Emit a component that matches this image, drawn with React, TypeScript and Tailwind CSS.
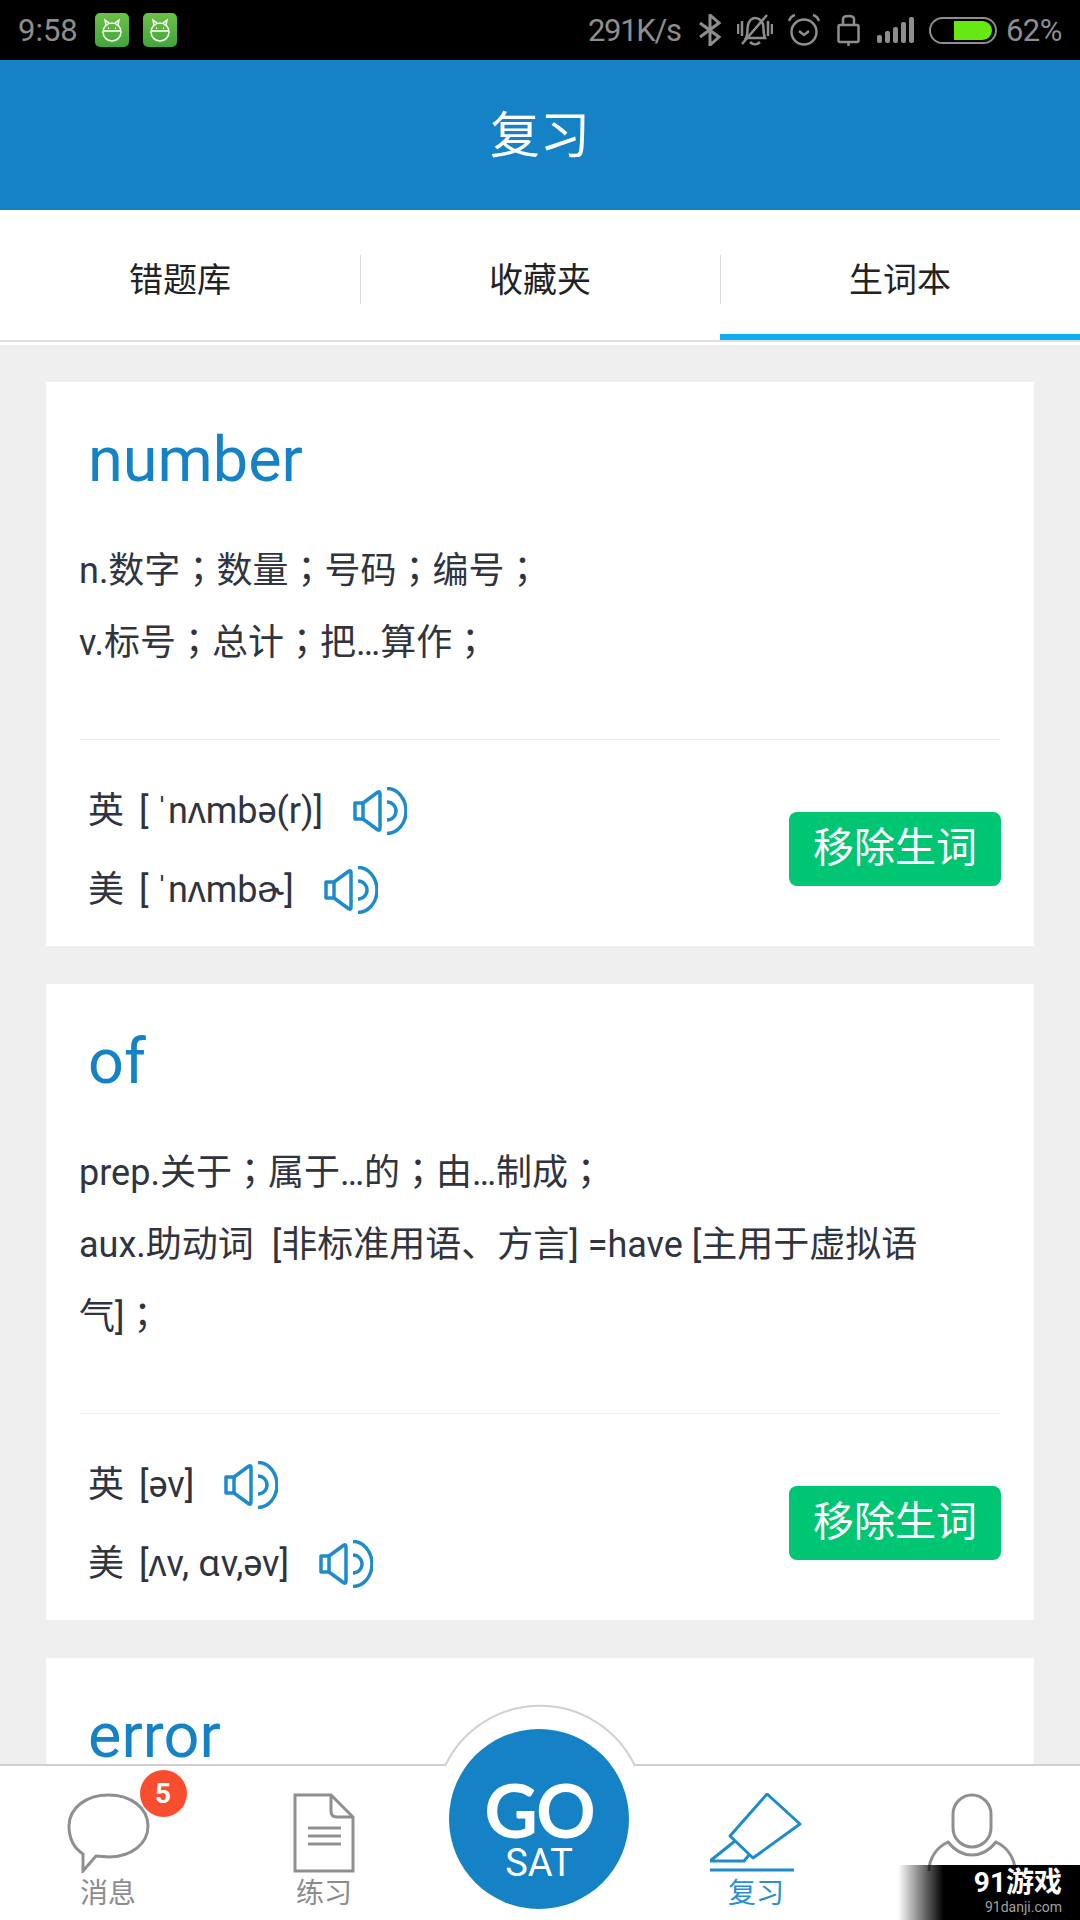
function CatIcon() {
  return (
    <div className="w-[34px] h-[34px] rounded-[5px] bg-gradient-to-b from-[#6cc044] to-[#3da73b] flex items-center justify-center">
      <svg width="22" height="24" viewBox="0 0 22 24" fill="none" stroke="#fff" strokeWidth="1.5">
        <circle cx="11" cy="14" r="9" />
        <path d="M2 13h18M5 7L4 2l4 3M17 7l1-5-4 3" />
        <path d="M7 10h1M14 10h1" />
      </svg>
    </div>
  );
}

function StatusIcons() {
  return (
    <div className="flex items-center text-[#8e8e8e]">
      <span className="text-[31px] leading-none tracking-[-1.3px] w-[111px]">291K/s</span>
      <svg width="22" height="32" viewBox="0 0 22 32" fill="none" stroke="currentColor" strokeWidth="3">
        <path d="M1 9l19 14-9 8V1l9 8L1 23" />
      </svg>
      <svg className="ml-[16px]" width="36" height="34" viewBox="0 0 36 34" fill="none" stroke="currentColor" strokeWidth="2.5">
        <path d="M9 25c2-3 1-8 2-13 1-4 4-7 7-7s6 2 8 6c1 5 0 10 2 14z" />
        <path d="M13 29c3 3 7 3 10 0M5 31L30 2M1 11v10M5 8v15M31 8v15M35 11v10" />
      </svg>
      <svg className="ml-[14px]" width="34" height="34" viewBox="0 0 34 34" fill="none" stroke="currentColor" strokeWidth="2.5">
        <circle cx="17" cy="19" r="12.5" />
        <path d="M12 18l5 4 5-4M2 8c1-3 3-5 6-6M32 8c-1-3-3-5-6-6" />
      </svg>
      <svg className="ml-[16px]" width="23" height="32" viewBox="0 0 23 32" fill="none" stroke="currentColor" strokeWidth="2.5">
        <rect x="1.5" y="11" width="20" height="17" rx="1.5" />
        <path d="M6 11V5c0-2 2-3 5.500-3S17 3 17 5v6M11.500 28v4" />
      </svg>
      <svg className="ml-[17px]" width="37" height="28" viewBox="0 0 37 28" fill="#8e8e8e">
        <rect x="0" y="19" width="5" height="8" rx="2" />
        <rect x="8" y="15" width="5" height="12" rx="2" />
        <rect x="16" y="11" width="5" height="16" rx="2" />
        <rect x="24" y="6" width="5" height="21" rx="2" />
        <rect x="32" y="1" width="5" height="26" rx="2" />
      </svg>
      <div className="ml-[15px] w-[68px] h-[27px] rounded-full border-2 border-[#8e8e8e] flex justify-end items-center pr-[3px]">
        <div className="w-[38px] h-[19px] bg-[#66e812] rounded-r-full" />
      </div>
      <span className="ml-[9px] text-[31px] leading-none tracking-[-0.5px]">62%</span>
    </div>
  );
}

function StatusBar() {
  return (
    <div className="h-[60px] bg-black flex items-center justify-between pl-[18px] pr-[18px]">
      <div className="flex items-center">
        <span className="text-[31px] leading-none text-[#8e8e8e] w-[77px]">9:58</span>
        <CatIcon />
        <div className="ml-[14px]">
          <CatIcon />
        </div>
      </div>
      <StatusIcons />
    </div>
  );
}

function Tabs() {
  const tabs = ["错题库", "收藏夹", "生词本"];
  return (
    <div className="h-[135px] bg-white">
      <div className="h-[132px] grid grid-cols-3 border-b-2 border-[#dedede]">
        {tabs.map((tab, i) => (
          <div key={tab} className="relative flex items-center justify-center pt-[10px] text-[34px] text-[#222]">
            <span>{tab}</span>
            {i < 2 && <div className="absolute right-[-1px] top-[45px] h-[49px] w-px bg-[#dcdcdc]" />}
            {i === 2 && <div className="absolute inset-x-0 bottom-0 h-[6px] bg-[#0cb0ef]" />}
          </div>
        ))}
      </div>
    </div>
  );
}

function Speaker() {
  return (
    <svg width="54" height="48" viewBox="0 0 54 48" fill="none" stroke="#1e8bcb" strokeWidth="3.5" strokeLinejoin="round">
      <path d="M2 16H10V32H2Z" />
      <path d="M10 16L25 5Q27 4 27 7V41Q27 44 25 43L10 32" />
      <path d="M34 1.500A19 22.500 0 0 1 34 46.500" />
      <path d="M34 15A9 9 0 0 1 34 33" />
    </svg>
  );
}

// the full-width semicolon sits centred in the reference, as in the JP cut of the font
function DefText({ text }: { text: string }) {
  const parts = text.split("；");
  return (
    <>
      {parts.map((part, i) => (
        <span key={i}>
          {part}
          {i < parts.length - 1 && <span className="font-['Noto_Sans_CJK_JP',sans-serif] leading-[0]">；</span>}
        </span>
      ))}
    </>
  );
}

type WordCardProps = {
  word: string;
  defs: string[];
  uk: string;
  us: string;
};

function WordTitle({ word }: { word: string }) {
  return <div className="h-[76px] pl-[9px] text-[63px] leading-[76px] text-[#1482c4]">{word}</div>;
}

function PhoneticRow({ label, text }: { label: string; text: string }) {
  return (
    <div className="h-[79px] flex items-center">
      <span>{label}</span>
      <span className="ml-[15px] whitespace-pre">{text}</span>
      <div className="ml-[30px]">
        <Speaker />
      </div>
    </div>
  );
}

function WordCard({ word, defs, uk, us }: WordCardProps) {
  return (
    <div className="bg-white pt-[40px] pb-[17px] px-[33px] mb-[38px]">
      <WordTitle word={word} />
      <div className="mt-[37px] max-w-[880px] text-[36px] leading-[72px] text-[#30343f] whitespace-pre-wrap">
        {defs.map((d) => (
          <div key={d}>
            <DefText text={d} />
          </div>
        ))}
      </div>
      <div className="mt-[60px] h-px bg-[#eeeeee]" />
      <div className="mt-[31px] flex items-center justify-between">
        <div className="pl-[9px] text-[36px] text-[#30343f]">
          <PhoneticRow label="英" text={uk} />
          <PhoneticRow label="美" text={us} />
        </div>
        <div className="w-[212px] h-[74px] mb-[3px] rounded-[8px] bg-[#00c572] text-white text-[41px] flex items-center justify-center">
          移除生词
        </div>
      </div>
    </div>
  );
}

function NavIcon({ label, active, children }: { label?: string; active?: boolean; children: React.ReactNode }) {
  return (
    <div className="flex flex-col items-center">
      <div className="h-[80px] flex items-start justify-center">{children}</div>
      {label && (
        <span className={"mt-[3px] text-[28px] leading-[36px] " + (active ? "text-[#2b8fce]" : "text-[#8c8c8c]")}>{label}</span>
      )}
    </div>
  );
}

function BottomNav() {
  return (
    <div className="relative h-[156px] bg-white border-t-2 border-[#cfcfcf]">
      <svg className="absolute left-[441px] top-[-63px]" width="198" height="66" viewBox="0 0 198 66" fill="#fff" stroke="#d0d0d0" strokeWidth="2">
        <path d="M4 63A105 105 0 0 1 194 63" />
      </svg>
      <div className="grid grid-cols-5 pt-[27px]">
        <NavIcon label="消息">
          <div className="relative">
            <svg width="83" height="80" viewBox="0 0 83 80" fill="none" stroke="#8f8f8f" strokeWidth="3">
              <path d="M16 61C7 55 2 45 2 33C2 15 19 2 41.500 2C64 2 81 15 81 33C81 51 64 64 41.500 64C38 64 33 63 29 63L16 78Z" />
            </svg>
            <div className="absolute left-[73px] top-[-23px] w-[47px] h-[47px] rounded-full bg-[#f94d2f] text-white text-[28px] font-bold flex items-center justify-center">
              5
            </div>
          </div>
        </NavIcon>
        <NavIcon label="练习">
          <svg width="62" height="80" viewBox="0 0 62 80" fill="none" stroke="#8f8f8f" strokeWidth="3">
            <path d="M2 2H38L60 24V78H2Z" />
            <path d="M38 2V18Q38 24 44 24H60" />
            <path d="M15 35H48M15 43H48M15 51H48" />
          </svg>
        </NavIcon>
        <div />
        <NavIcon label="复习" active>
          <svg width="92" height="80" viewBox="0 0 92 80" fill="none" stroke="#1e8bcb" strokeWidth="3" strokeLinejoin="round">
            <path d="M57 1L90 31L43 65L20 43Z" />
            <path d="M25 48L0 68H34L39 62" />
            <path d="M0 77H84" />
          </svg>
        </NavIcon>
        <NavIcon>
          <svg width="90" height="80" viewBox="0 0 90 80" fill="none" stroke="#8f8f8f" strokeWidth="3">
            <rect x="26" y="2" width="38" height="52" rx="19" />
            <path d="M2 78C2 65 10 54 21 49C28 58 36 62 45 62C54 62 62 58 69 49C80 54 88 65 88 78" />
          </svg>
        </NavIcon>
      </div>
      <div className="absolute left-[449px] top-[-37px] w-[180px] h-[180px] rounded-full bg-[#1482c4] flex flex-col items-center text-white">
        <span className="mt-[51px] text-[74px] leading-[60px] font-bold tracking-[-2px] font-[Lato,sans-serif]">GO</span>
        <span className="mt-[3px] text-[38px] leading-[40px]">SAT</span>
      </div>
      <div className="absolute right-0 bottom-0 w-[182px] h-[55px] bg-gradient-to-r from-transparent via-black via-25% to-black flex flex-col items-end pr-[18px]">
        <span className="text-[28px] leading-[32px] mt-[2px] font-bold text-white">91游戏</span>
        <span className="text-[14px] leading-[16px] text-[#a0a0a0]">91danji.com</span>
      </div>
    </div>
  );
}

export default function App() {
  return (
    <div className="w-[1080px] h-[1920px] flex flex-col overflow-hidden bg-[#efefef] font-[Roboto,'Noto_Sans_CJK_SC',sans-serif]">
      <StatusBar />
      <div className="h-[150px] pt-[2px] bg-[#1482c4] flex items-center justify-center text-white text-[50px]">复习</div>
      <Tabs />
      <div className="flex-1 overflow-hidden px-[46px] pt-[37px]">
        <WordCard
          word="number"
          defs={["n.数字；数量；号码；编号；", "v.标号；总计；把…算作；"]}
          uk={"[\u2009ˈnʌmbə(r)]"}
          us={"[\u2009ˈnʌmbɚ]"}
        />
        <WordCard
          word="of"
          defs={["prep.关于；属于…的；由…制成；", "aux.助动词  [非标准用语、方言] =have [主用于虚拟语气]；"]}
          uk="[əv]"
          us="[ʌv, ɑv,əv]"
        />
        <div className="bg-white pt-[40px] px-[33px] h-[200px]">
          <WordTitle word="error" />
        </div>
      </div>
      <BottomNav />
    </div>
  );
}
